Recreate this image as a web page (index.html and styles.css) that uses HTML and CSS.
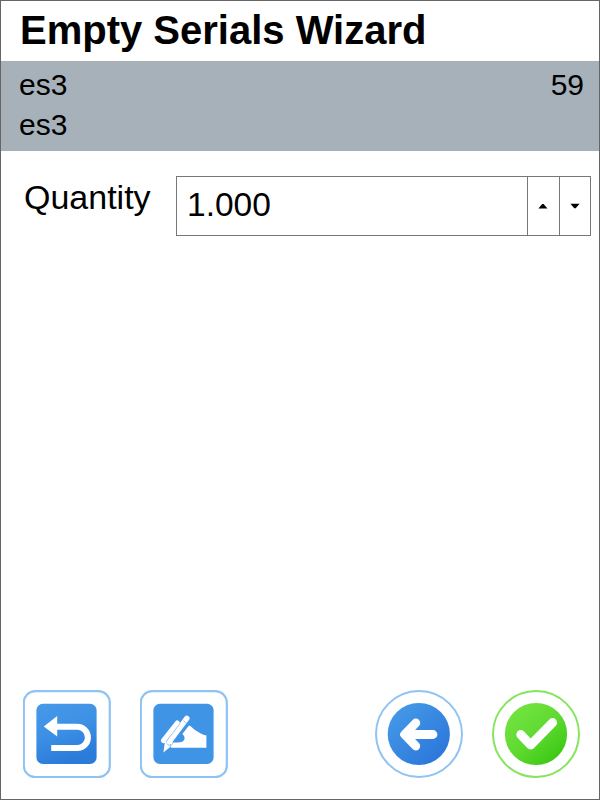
FILE: index.html
```
<!DOCTYPE html>
<html lang="en">
<head>
<meta charset="utf-8">
<title>Empty Serials Wizard</title>
<link rel="stylesheet" href="styles.css">
</head>
<body>
<main class="window">
  <h1 class="title">Empty Serials Wizard</h1>
  <section class="summary">
    <div class="summary-row"><span>es3</span><span>59</span></div>
    <div class="summary-row"><span>es3</span></div>
  </section>
  <section class="field">
    <span class="label">Quantity</span>
    <div class="spinner">
      <span class="value">1.000</span>
      <button class="step" aria-label="Increase"><svg width="10" height="6" viewBox="0 0 10 6"><path d="M.4 5.6 4.2 1h1.4l3.9 4.6z"/></svg></button>
      <button class="step" aria-label="Decrease"><svg width="10" height="6" viewBox="0 0 10 6"><path d="M.4.7h9.2L5.7 5.3H4.3z"/></svg></button>
    </div>
  </section>
  <footer class="actions">
    <button class="action" aria-label="Undo">
      <svg width="88" height="88" viewBox="0 0 88 88">
        <defs><linearGradient id="undo" x1="0" y1="0" x2=".35" y2="1"><stop offset="0" stop-color="#4799e8"/><stop offset=".5" stop-color="#3d91e5"/><stop offset="1" stop-color="#2b7bdb"/></linearGradient></defs>
        <rect class="ring" x=".8" y="1.2" width="86" height="86" rx="11.5"/>
        <rect x="13.4" y="13.8" width="60.2" height="60.2" rx="6.5" fill="url(#undo)"/>
        <path d="M32 36.8h22.3a10.6 10.6 0 0 1 0 21.2H28.2" fill="none" stroke="#fff" stroke-width="6"/>
        <path d="M20.8 36.5 34.2 26v20.4z" fill="#fff"/>
      </svg>
    </button>
    <button class="action" aria-label="Sign">
      <svg width="88" height="88" viewBox="0 0 88 88">
        <rect class="ring" x=".8" y="1.2" width="86" height="86" rx="11.5"/>
        <rect x="13.4" y="13.8" width="60.2" height="60.2" rx="6.5" fill="#3f94e6"/>
        <path d="M42.4 44 49 35.6c3 1.2 4.4 3.6 7.2 5.2l4.2 2.4c2 1.2 4 2 6 2.4v12.1H31V51.9c4 .8 8.8.9 11.6-.5 2.8-1.7 2.6-4.8-.2-7.4z" fill="#fff"/>
        <path d="M37.3 33 23.4 50.6" fill="none" stroke="#fff" stroke-width="5" stroke-linecap="round"/>
        <path d="M46.8 28.4 29 52" fill="none" stroke="#fff" stroke-width="5.4" stroke-linecap="round"/>
        <path d="m25 51.5 6.4 4.6-8 6.4z" fill="#fff"/>
        <path d="M40 33.6 26.2 51.6M43.4 30.8l3.7 2.8M26.6 53.6l4 2.8 3-4.2" fill="none" stroke="#77b2ed" stroke-width=".7"/>
      </svg>
    </button>
    <button class="action back" aria-label="Back">
      <svg width="88" height="88" viewBox="0 0 88 88">
        <defs><linearGradient id="back" x1=".1" y1=".1" x2=".85" y2=".9"><stop offset="0" stop-color="#4599e7"/><stop offset="1" stop-color="#2b77db"/></linearGradient></defs>
        <circle class="ring thin" cx="44" cy="44" r="43"/>
        <circle cx="43.8" cy="44" r="31.1" fill="url(#back)"/>
        <path d="M58 44.5H31M40.8 33 29.6 44.5 40.8 56" fill="none" stroke="#fff" stroke-width="8.8" stroke-linecap="round" stroke-linejoin="round"/>
      </svg>
    </button>
    <button class="action" aria-label="Confirm">
      <svg width="88" height="88" viewBox="0 0 88 88">
        <defs><linearGradient id="ok" x1=".15" y1=".1" x2=".85" y2=".9"><stop offset="0" stop-color="#73e341"/><stop offset=".5" stop-color="#5fda31"/><stop offset="1" stop-color="#3cc815"/></linearGradient></defs>
        <circle class="ring green" cx="44" cy="44" r="43"/>
        <circle cx="44" cy="44" r="31.1" fill="url(#ok)"/>
        <path d="m28.8 44.6 9.8 10.4 22-22.4" fill="none" stroke="#fff" stroke-width="9" stroke-linecap="round" stroke-linejoin="round"/>
      </svg>
    </button>
  </footer>
</main>
</body>
</html>
```

FILE: styles.css
```
* { box-sizing: border-box; }

body {
  margin: 0;
  background: #fff;
  color: #000;
  font-family: "Liberation Sans", Arial, sans-serif;
}

.window {
  display: flex;
  flex-direction: column;
  width: 600px;
  height: 800px;
  border: 1px solid #666;
}

.title {
  height: 60px;
  margin: 0;
  padding: 6px 0 0 19px;
  font-size: 40px;
  line-height: 46px;
  font-weight: bold;
}

.summary {
  height: 90px;
  padding: 4px 15px 0 18px;
  background: #a7b1b9;
  font-size: 30px;
}

.summary-row {
  display: flex;
  justify-content: space-between;
  height: 40px;
  line-height: 40px;
}

.field {
  display: flex;
  justify-content: space-between;
  padding: 25px 8px 0 23px;
  font-size: 34px;
}

.label { line-height: 42px; }

.spinner {
  display: flex;
  width: 415px;
  height: 60px;
  border: 1px solid #777;
}

.value {
  flex: 1;
  padding-left: 10px;
  font-size: 33.5px;
  line-height: 56px;
}

.step {
  display: flex;
  align-items: center;
  justify-content: center;
  width: 31.5px;
  padding: 0;
  border: 0;
  border-left: 1px solid #777;
  background: #fff;
}

.actions {
  display: flex;
  gap: 29px;
  margin-top: auto;
  padding: 0 19px 21px 22px;
}

.action {
  width: 88px;
  height: 88px;
  padding: 0;
  border: 0;
  background: none;
}

.action svg { display: block; }

.back { margin-left: auto; }

.ring {
  fill: #fff;
  stroke: #8fc3f3;
  stroke-width: 2.2;
}

.thin { stroke-width: 2; }

.green {
  stroke: #86e45e;
  stroke-width: 2;
}
```
